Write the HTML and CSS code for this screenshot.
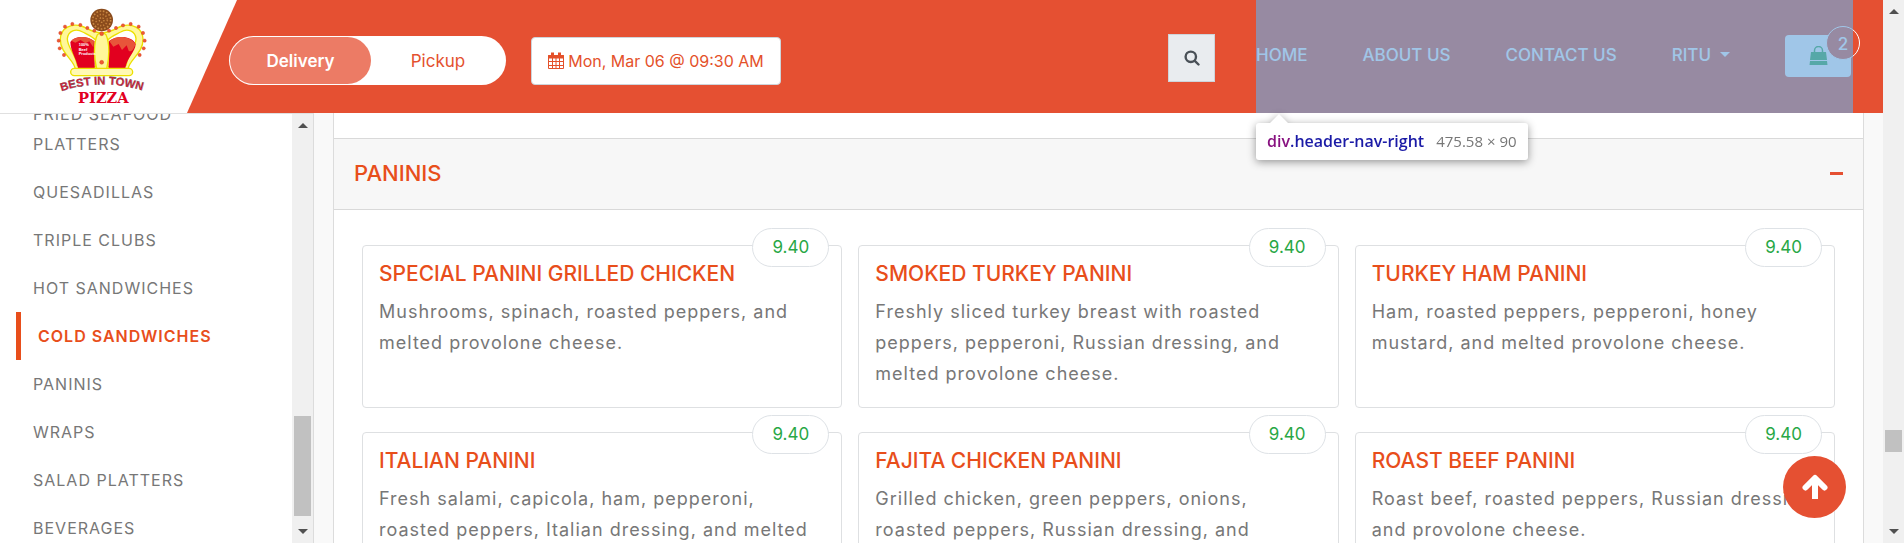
FILE: index.html
```html
<!DOCTYPE html>
<html lang="en">
<head>
<meta charset="utf-8">
<title>Best in Town Pizza</title>
<link rel="stylesheet" href="styles.css">
</head>
<body>
<div class="page">
  <header class="header">
    <a class="logo" href="#" aria-label="Best in Town Pizza">
      <svg width="110" height="112" viewBox="0 0 330 336">
        <circle cx="155" cy="60" r="34" fill="#8a4b1c"/>
        <circle cx="155" cy="60" r="27" fill="none" stroke="#c98842" stroke-width="5" stroke-dasharray="5 5"/>
        <circle cx="155" cy="60" r="17" fill="none" stroke="#c07c3a" stroke-width="5" stroke-dasharray="4 5"/>
        <circle cx="155" cy="60" r="7" fill="none" stroke="#c98842" stroke-width="4" stroke-dasharray="4 4"/>
        <g stroke="#ece000" stroke-width="4">
          <path fill="#fff799" d="M76 208C74 180 30 160 31 118C32 82 66 70 94 78C112 84 124 96 150 98H160C186 96 198 84 216 78C244 70 278 82 279 118C280 160 236 180 234 208Z"/>
          <path fill="#fff" d="M82 196C76 160 52 142 52 116C54 92 78 84 98 96C114 104 130 110 138 122L136 200Z"/>
          <path fill="#fff" d="M228 196C234 160 258 142 258 116C256 92 232 84 212 96C196 104 180 110 172 122L174 200Z"/>
        </g>
        <path fill="#e2001f" d="M84 204C78 172 62 156 61 126C74 106 112 106 134 124V204Z"/>
        <path fill="#e2001f" d="M226 204C232 172 256 156 257 132C244 106 198 106 176 124V204Z"/>
        <path fill="#e8553a" d="M64 122C80 106 116 108 132 124L130 142L118 124L106 130L92 120L76 128Z"/>
        <path fill="#e8553a" d="M178 124C198 106 238 106 256 132C252 150 242 158 236 152L230 136L216 150L206 132L190 140Z"/>
        <path fill="#fff799" stroke="#ece000" stroke-width="4" d="M142 104C130 130 132 176 140 206H170C178 176 180 130 168 104Q155 92 142 104Z"/>
        <rect x="62" y="205" width="186" height="22" rx="11" fill="#fff9b4" stroke="#ece000" stroke-width="4"/>
        <g fill="#ef5a33" stroke="#c8321c" stroke-width="1">
          <circle cx="29" cy="145" r="5"/><circle cx="26" cy="122" r="5"/><circle cx="31" cy="99" r="5"/><circle cx="45" cy="80" r="5"/><circle cx="67" cy="72" r="5"/><circle cx="91" cy="75" r="5"/><circle cx="112" cy="84" r="5"/><circle cx="133" cy="92" r="5"/><circle cx="155" cy="101" r="6"/><circle cx="177" cy="92" r="5"/><circle cx="198" cy="84" r="5"/><circle cx="219" cy="76" r="5"/><circle cx="242" cy="72" r="5"/><circle cx="266" cy="80" r="5"/><circle cx="279" cy="99" r="5"/><circle cx="284" cy="122" r="5"/><circle cx="281" cy="145" r="5"/><circle cx="269" cy="165" r="5"/><circle cx="42" cy="165" r="5"/><circle cx="155" cy="187" r="6"/>
        </g>
        <g class="logo-small"><text x="86" y="138">100%</text><text x="86" y="152">Beef</text><text x="86" y="166">Products</text></g>
        <path id="arc" d="M28 276Q155 232 284 274" fill="none"/>
        <text class="logo-arc"><textPath href="#arc" startOffset="50%">BEST IN TOWN</textPath></text>
        <text class="logo-name" x="160" y="308">PIZZA</text>
      </svg>
    </a>
    <div class="header-bar">
      <div class="order-tools">
        <div class="toggle">
          <button class="toggle-option active" type="button" aria-pressed="true">Delivery</button>
          <button class="toggle-option" type="button" aria-pressed="false">Pickup</button>
        </div>
        <button class="date-button" type="button">
          <svg width="16" height="17" viewBox="0 0 16 17" fill="none" stroke="#e4512a" aria-hidden="true"><path d="M.5 3.5h15v13H.5zM.5 9.5h15M.5 13.5h15M4.500 6v10.500M8 6v10.500M11.500 6v10.500"/><path fill="#e4512a" d="M.5 3.500h15v2.500H.5z"/><path stroke-width="3" d="M4.500.5v4M11.500.5v4"/></svg>
          <span>Mon, Mar 06 @ 09:30 AM</span>
        </button>
      </div>
      <button class="search-button" type="button" aria-label="Search">
        <svg width="16" height="16" viewBox="0 0 16 16" fill="none" stroke="#495057" stroke-width="2.400" stroke-linecap="round" aria-hidden="true"><circle cx="6.800" cy="6.800" r="5.200"/><path d="M10.800 10.800l3.700 3.700"/></svg>
      </button>
      <div class="header-nav-right">
        <nav class="nav">
          <a href="#">HOME</a>
          <a href="#">ABOUT US</a>
          <a href="#">CONTACT US</a>
          <a class="user" href="#">RITU <span class="caret"></span></a>
        </nav>
        <button class="cart" type="button" aria-label="Cart, 2 items">
          <svg width="19" height="19" viewBox="0 0 19 19" aria-hidden="true"><path fill="#28a745" d="M2 6h15l1 8H1zM1 15h17l.5 4H.5z"/><path fill="none" stroke="#28a745" stroke-width="1.500" d="M5.500 9V4.500a4 4 0 0 1 8 0V9"/></svg>
          <span class="badge">2</span>
        </button>
        <div class="highlight"></div>
        <div class="inspect-tip"><span class="tip-name"><span class="tip-tag">div</span>.header-nav-right</span><span class="tip-size">475.58 × 90</span></div>
      </div>
    </div>
  </header>
  <div class="body">
    <aside class="sidebar">
      <ul class="menu">
        <li><a href="#">FRIED SEAFOOD PLATTERS</a></li>
        <li><a href="#">QUESADILLAS</a></li>
        <li><a href="#">TRIPLE CLUBS</a></li>
        <li><a href="#">HOT SANDWICHES</a></li>
        <li><a class="current" href="#">COLD SANDWICHES</a></li>
        <li><a href="#">PANINIS</a></li>
        <li><a href="#">WRAPS</a></li>
        <li><a href="#">SALAD PLATTERS</a></li>
        <li><a href="#">BEVERAGES</a></li>
      </ul>
      <div class="scrollbar side-scroll"><i class="arrow up"></i><i class="thumb"></i><i class="arrow down"></i></div>
    </aside>
    <main class="content">
      <section class="panel">
        <div class="panel-head">
          <h2>PANINIS</h2>
          <button class="collapse" type="button" aria-label="Collapse"></button>
        </div>
        <div class="cards">
          <article class="card"><span class="price">9.40</span><h3>SPECIAL PANINI GRILLED CHICKEN</h3><p>Mushrooms, spinach, roasted peppers, and<br>melted provolone cheese.</p></article>
          <article class="card"><span class="price">9.40</span><h3>SMOKED TURKEY PANINI</h3><p>Freshly sliced turkey breast with roasted<br>peppers, pepperoni, Russian dressing, and<br>melted provolone cheese.</p></article>
          <article class="card"><span class="price">9.40</span><h3>TURKEY HAM PANINI</h3><p>Ham, roasted peppers, pepperoni, honey<br>mustard, and melted provolone cheese.</p></article>
          <article class="card"><span class="price">9.40</span><h3>ITALIAN PANINI</h3><p>Fresh salami, capicola, ham, pepperoni,<br>roasted peppers, Italian dressing, and melted</p></article>
          <article class="card"><span class="price">9.40</span><h3>FAJITA CHICKEN PANINI</h3><p>Grilled chicken, green peppers, onions,<br>roasted peppers, Russian dressing, and</p></article>
          <article class="card"><span class="price">9.40</span><h3>ROAST BEEF PANINI</h3><p>Roast beef, roasted peppers, Russian dressing,<br>and provolone cheese.</p></article>
        </div>
      </section>
    </main>
  </div>
  <button class="to-top" type="button" aria-label="Back to top">
    <svg width="26" height="26" viewBox="0 0 26 26" fill="none" stroke="#fff" stroke-width="6" aria-hidden="true"><path stroke-linecap="round" stroke-linejoin="round" d="M3.500 13.500L13 4l9.500 9.500"/><path stroke-linecap="butt" d="M13 5v20"/></svg>
  </button>
</div>
<div class="scrollbar page-scroll"><i class="arrow up"></i><i class="thumb"></i><i class="arrow down"></i></div>
</body>
</html>
```
FILE: styles.css
```css
* { box-sizing: border-box; }
body {
  margin: 0;
  height: 100vh;
  display: flex;
  overflow: hidden;
  font-family: Inter, "Open Sans", sans-serif;
  font-size: 17px;
  color: #777;
  background: #fff;
}
a { color: inherit; text-decoration: none; }
button { font: inherit; margin: 0; padding: 0; border: 0; cursor: pointer; }
h2, h3, p, ul { margin: 0; padding: 0; }
svg { display: block; flex: none; }

.page { position: relative; flex: 1; min-width: 0; display: flex; flex-direction: column; }
.header { position: relative; z-index: 2; flex: none; display: flex; height: 113px; background: #fff; }
.logo { width: 187px; padding-left: 50px; }
.logo-small { fill: #fff; font: bold 12px "Liberation Sans", sans-serif; }
.logo-arc { fill: #e2203a; stroke: #444; stroke-width: 1px; font: bold 34px "Liberation Sans", sans-serif; text-anchor: middle; }
.logo-name { fill: #e2001f; font: bold 44px "DejaVu Serif", serif; text-anchor: middle; }

.header-bar { position: relative; flex: 1; display: flex; align-items: center; padding: 0 30px 0 42px; }
.header-bar::before {
  content: "";
  position: absolute;
  inset: 0;
  background: #e55032;
  clip-path: polygon(50px 0, 100% 0, 100% 100%, 0 100%);
}
.order-tools { position: relative; display: flex; align-items: center; gap: 25px; padding-top: 8px; }
.toggle { display: flex; width: 277px; height: 49px; padding: 1px; border-radius: 25px; background: #fff; }
.toggle-option { flex: 1; border-radius: 24px; background: none; color: #e4512f; }
.toggle-option.active { flex: none; width: 141px; background: #ec7b65; color: #fff; font-weight: 600; }
.date-button {
  display: flex; align-items: center; justify-content: center; gap: 4px;
  min-width: 250px; height: 48px; padding: 0 16px;
  border: 1px solid #ced4da; border-radius: 4px;
  background: #fff; color: #e4512a; font-size: 16px;
}
.search-button {
  position: relative; display: grid; place-items: center;
  width: 47px; height: 48px; margin: 2px 41px 0 auto;
  border: 1px solid #ced4da; background: #e9ecef;
}
.header-nav-right { position: relative; display: flex; align-items: center; gap: 55px; height: 100%; padding: 0 2px 2px 0; }
.nav { display: flex; gap: 55px; padding-bottom: 2px; color: #fff; font-size: 17px; font-weight: 500; }
.user { display: flex; align-items: center; gap: 9px; }
.caret { border: 5px solid transparent; border-top-color: #fff; border-bottom: 0; }
.cart { position: relative; display: grid; place-items: center; width: 66px; height: 42px; border-radius: 4px; background: #fff; }
.badge {
  position: absolute; right: -9px; top: -9px;
  width: 34px; height: 34px; border: 1px solid #fff; border-radius: 50%;
  background: #e55032; color: #fff; font-weight: 500; line-height: 34px;
}
.highlight { position: absolute; inset: 0; background: rgba(111, 168, 220, .66); }
.inspect-tip {
  position: absolute; left: 0; top: 123px;
  display: flex; gap: 12px; padding: 0 11px;
  border-radius: 3px; background: #fff; white-space: nowrap;
  font: 15px/37px "Open Sans", sans-serif;
  filter: drop-shadow(0 2px 4px rgba(0, 0, 0, .4));
}
.inspect-tip::before {
  content: ""; position: absolute; left: 14px; top: -9px;
  border: 9px solid transparent; border-top: 0; border-bottom-color: #fff;
}
.tip-name { color: #1a1aa6; font-size: 16px; font-weight: 600; }
.tip-tag { color: #881280; }

.body { flex: 1; min-height: 0; display: flex; background: #f9f9f9; }
.sidebar {
  flex: none; display: flex; width: 314px; overflow: hidden;
  border-top: 1px solid #e0e0e0; border-right: 1px solid #dcdcdc; background: #fff;
}
.menu { flex: 1; margin-top: -24px; padding-left: 16px; list-style: none; line-height: 30px; letter-spacing: 1px; font-size: 16px; }
.menu a { display: block; padding: 9px 70px 9px 17px; }
.menu .current { padding-right: 0; border-left: 5px solid #e84e1b; color: #e84e1b; font-weight: 600; }

.scrollbar { flex: none; display: flex; flex-direction: column; align-items: center; width: 21px; background: #f0f0f0; }
.arrow { border: 5px solid transparent; }
.up { border-top: 0; border-bottom-color: #505050; }
.down { border-bottom: 0; border-top-color: #505050; margin-bottom: 9px; }
.thumb { width: 17px; background: #c1c1c1; }
.side-scroll .up { margin-top: 9px; }
.side-scroll .thumb { height: 100px; margin-top: auto; margin-bottom: 13px; }
.page-scroll .up { margin-top: 9px; }
.page-scroll .thumb { height: 22px; margin-top: auto; margin-bottom: 77px; }

.content { flex: 1; min-width: 0; padding: 0 19px; }
.panel { height: 100%; padding-top: 25px; border: solid #dcdcdc; border-width: 0 1px; background: #fff; overflow: hidden; }
.panel-head {
  display: flex; align-items: center; justify-content: space-between;
  height: 72px; padding: 0 20px 2px;
  border: solid #d9d9d9; border-width: 1px 0; background: #f7f7f7;
}
h2 { color: #e84e1b; font-size: 22px; font-weight: 500; }
.collapse { width: 13px; height: 3px; background: #e55032; }
.cards { display: grid; grid-template-columns: repeat(3, 1fr); gap: 24px 16px; padding: 35px 28px; }
.card { position: relative; display: flex; flex-direction: column; gap: 9px; min-width: 0; padding: 15px 16px 18px; border: 1px solid #dee0e2; border-radius: 4px; }
.card h3 { color: #e84e1b; font-size: 21px; line-height: 26px; font-weight: 500; }
.card p { min-height: 93px; font-size: 18px; line-height: 31px; letter-spacing: 1px; white-space: nowrap; }
.price {
  position: absolute; right: 12px; top: -18px;
  width: 77px; height: 39px; border: 1px solid #dee2e6; border-radius: 20px;
  background: #fff; color: #28a745; text-align: center; line-height: 37px;
}
.to-top {
  position: absolute; right: 37px; bottom: 25px;
  display: grid; place-items: center;
  width: 63px; height: 62px; border-radius: 50%; background: #e55032;
}
```
